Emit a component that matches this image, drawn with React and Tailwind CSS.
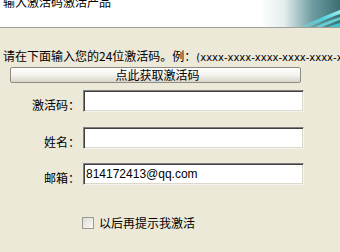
import React from "react";

const cn = { fontFamily: '"Noto Sans CJK SC", "DejaVu Sans", sans-serif' };
const latin = { fontFamily: '"Liberation Sans", Arial, sans-serif' };

function HeaderArt() {
  return (
    <svg width="80" height="27" viewBox="0 0 80 27" className="shrink-0">
      <defs>
        <linearGradient id="hg" x1="0" y1="0" x2="1" y2="0">
          <stop offset="0" stopColor="#ffffff" />
          <stop offset="0.3" stopColor="#e4eeee" />
          <stop offset="0.65" stopColor="#6f9ea1" />
          <stop offset="1" stopColor="#3a6f73" />
        </linearGradient>
        <linearGradient id="hs" x1="0" y1="1" x2="1" y2="0">
          <stop offset="0" stopColor="#7fe3ea" stopOpacity="0.2" />
          <stop offset="0.5" stopColor="#4fd2dd" />
          <stop offset="1" stopColor="#9cf0f4" />
        </linearGradient>
      </defs>
      <rect width="80" height="27" fill="url(#hg)" />
      <path d="M40 27 C52 22 64 16 80 10 L80 14 C66 19 56 24 50 27 Z" fill="url(#hs)" />
      <path d="M55 27 C62 24 70 20 80 17 L80 20 C72 23 66 25 62 27 Z" fill="#66dbe3" opacity="0.85" />
      <path d="M68 27 C72 25 76 24 80 23 L80 27 Z" fill="#3fc4cf" />
    </svg>
  );
}

function Field({ label, value }) {
  return (
    <div className="flex items-center">
      <div className="w-[82px] pr-[2px] pt-[7px] text-right text-[12px] leading-[14px] text-black" style={cn}>
        {label}
      </div>
      <div
        className="ml-[1px] flex h-[22px] w-[221px] items-center border border-t-[#7f7f7f] border-l-[#7f7f7f] border-r-[#f4f3ee] border-b-[#f4f3ee] bg-white pl-[2px] text-[12px] text-black shadow-[inset_1px_1px_0_#404040,inset_-1px_-1px_0_#dcd8cc]"
        style={latin}
      >
        {value}
      </div>
    </div>
  );
}

export default function App() {
  return (
    <div className="flex h-[252px] w-[340px] flex-col overflow-hidden bg-[#ece9d8]">
      <div className="flex h-[28px] shrink-0 items-start justify-between border-b border-[#a09f98] bg-white">
        <div className="ml-[3px] mt-[-5px] text-[12px] leading-[14px] text-black" style={cn}>
          输入激活码激活产品
        </div>
        <HeaderArt />
      </div>

      <div className="flex flex-col pt-[21px]">
        <div className="h-[14px] whitespace-nowrap pl-[3px] text-[12px] leading-[14px] text-black" style={cn}>
          请在下面输入您的24位激活码。例：
          <span className="text-[10px]" style={{ fontFamily: '"DejaVu Sans", sans-serif' }}>
            (xxxx-xxxx-xxxx-xxxx-xxxx-xxxx)
          </span>
        </div>

        <button
          className="ml-[10px] mt-[4px] flex h-[16px] w-[291px] items-center justify-center rounded-[2px] border border-[#8d8b82] bg-gradient-to-b from-[#ffffff] via-[#f3f2ec] to-[#d9d6ca] pl-[4px] text-[12px] leading-[14px] text-black"
          style={cn}
        >
          点此获取激活码
        </button>

        <div className="mt-[7px]">
          <Field label="激活码：" value="" />
        </div>
        <div className="mt-[15px]">
          <Field label="姓名：" value="" />
        </div>
        <div className="mt-[14px]">
          <Field label="邮箱：" value="814172413@qq.com" />
        </div>

        <div className="ml-[82px] mt-[31px] flex items-center gap-[5px]">
          <div className="h-[12px] w-[12px] border border-[#9c9a90] bg-gradient-to-br from-[#dcdad2] to-[#fbfbf8]" />
          <span className="text-[12px] leading-[14px] text-black" style={cn}>
            以后再提示我激活
          </span>
        </div>
      </div>
    </div>
  );
}
